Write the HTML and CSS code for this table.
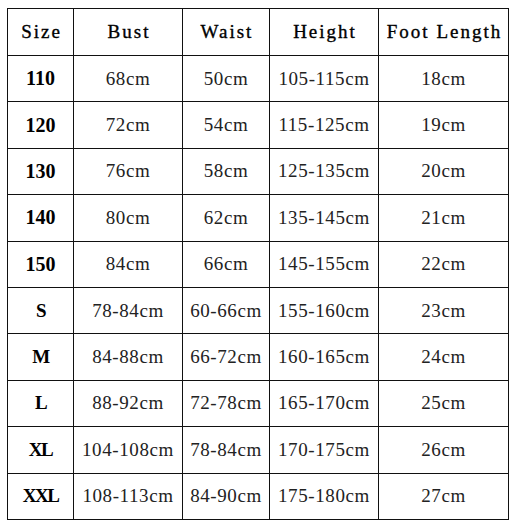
FILE: index.html
```html
<!DOCTYPE html>
<html>
<head>
<meta charset="utf-8">
<link rel="stylesheet" href="styles.css">
</head>
<body>
<div class="chart">
  <div class="cell head">Size</div><div class="cell head">Bust</div><div class="cell head">Waist</div><div class="cell head">Height</div><div class="cell head">Foot Length</div>
  <div class="cell size">110</div><div class="cell">68cm</div><div class="cell">50cm</div><div class="cell">105-115cm</div><div class="cell">18cm</div>
  <div class="cell size">120</div><div class="cell">72cm</div><div class="cell">54cm</div><div class="cell">115-125cm</div><div class="cell">19cm</div>
  <div class="cell size">130</div><div class="cell">76cm</div><div class="cell">58cm</div><div class="cell">125-135cm</div><div class="cell">20cm</div>
  <div class="cell size">140</div><div class="cell">80cm</div><div class="cell">62cm</div><div class="cell">135-145cm</div><div class="cell">21cm</div>
  <div class="cell size">150</div><div class="cell">84cm</div><div class="cell">66cm</div><div class="cell">145-155cm</div><div class="cell">22cm</div>
  <div class="cell size letter">S</div><div class="cell">78-84cm</div><div class="cell">60-66cm</div><div class="cell">155-160cm</div><div class="cell">23cm</div>
  <div class="cell size letter">M</div><div class="cell">84-88cm</div><div class="cell">66-72cm</div><div class="cell">160-165cm</div><div class="cell">24cm</div>
  <div class="cell size letter">L</div><div class="cell">88-92cm</div><div class="cell">72-78cm</div><div class="cell">165-170cm</div><div class="cell">25cm</div>
  <div class="cell size letter">XL</div><div class="cell">104-108cm</div><div class="cell">78-84cm</div><div class="cell">170-175cm</div><div class="cell">26cm</div>
  <div class="cell size letter">XXL</div><div class="cell">108-113cm</div><div class="cell">84-90cm</div><div class="cell">175-180cm</div><div class="cell">27cm</div>
</div>
</body>
</html>
```

FILE: styles.css
```css
html, body {
  margin: 0;
  background: #fff;
}
body {
  padding: 8px 0 0 7px;
}
.chart {
  display: grid;
  grid-template-columns: 65px 108px 86px 108px 129px;
  grid-template-rows: 46px repeat(10, 1fr);
  height: 512px;
  width: 502px;
  box-sizing: border-box;
  padding: 1px;
  gap: 1px;
  background: #111;
}
.cell {
  background: #fff;
  display: flex;
  align-items: center;
  justify-content: center;
  font-family: "Liberation Serif", serif;
  font-size: 19px;
  letter-spacing: 0.6px;
  color: #222;
  white-space: nowrap;
}
.head {
  color: #000;
  letter-spacing: 2px;
  padding-left: 2px;
  -webkit-text-stroke: 0.35px #000;
}
.size {
  font-weight: bold;
  font-size: 20px;
  letter-spacing: 0;
  color: #000;
}
.letter {
  font-size: 19px;
  letter-spacing: -1.5px;
}
```
